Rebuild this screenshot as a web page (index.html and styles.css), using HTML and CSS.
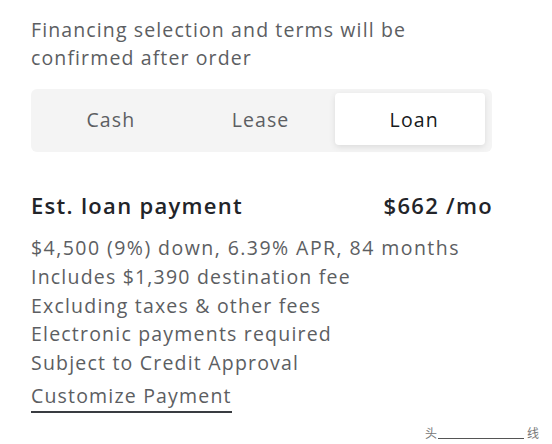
FILE: index.html
```
<!DOCTYPE html>
<html>
<head>
<meta charset="utf-8">
<link rel="stylesheet" href="styles.css">
</head>
<body>
<div class="page">
  <p class="note">Financing selection and terms will be confirmed after order</p>
  <div class="tabs">
    <div class="tab">Cash</div>
    <div class="tab">Lease</div>
    <div class="tab active">Loan</div>
  </div>
  <div class="payment">
    <span class="label">Est. loan payment</span>
    <span class="amount">$662 /mo</span>
  </div>
  <ul class="details">
    <li>$4,500 (9%) down, 6.39% APR, 84 months</li>
    <li>Includes $1,390 destination fee</li>
    <li>Excluding taxes &amp; other fees</li>
    <li>Electronic payments required</li>
    <li>Subject to Credit Approval</li>
  </ul>
  <a class="customize">Customize Payment</a>
  <div class="watermark"><span>头</span><span class="wm-line"></span><span>线</span></div>
</div>
</body>
</html>
```
FILE: styles.css
```
* { box-sizing: border-box; }
html, body { margin: 0; padding: 0; background: #fff; }
body {
  font-family: "Open Sans", "Noto Sans CJK SC", sans-serif;
  width: 552px;
  height: 444px;
  overflow: hidden;
}
.page {
  position: relative;
  padding: 16px 40px 0 31px;
  height: 444px;
}
.note {
  margin: 0;
  font-size: 19.5px;
  line-height: 28px;
  color: #5c5e62;
  letter-spacing: 1.12px;
  width: 440px;
}
.tabs {
  margin-top: 17px;
  width: 461px;
  height: 63px;
  background: #f4f4f4;
  border-radius: 6px;
  padding: 4px 7px 7px 5px;
  display: grid;
  grid-template-columns: 1fr 1fr 1fr;
}
.tab {
  display: flex;
  align-items: center;
  justify-content: center;
  font-size: 19.5px;
  color: #5c5e62;
  letter-spacing: 1.1px;
  border-radius: 4px;
}
.tab.active {
  background: #fff;
  color: #171a20;
  padding-left: 8px;
  box-shadow: 0 2px 6px rgba(0,0,0,0.10);
}
.payment {
  margin-top: 38px;
  width: 461px;
  display: flex;
  justify-content: space-between;
  align-items: baseline;
  font-size: 22px;
  font-weight: 600;
  color: #222429;
  letter-spacing: 1.3px;
  line-height: 30px;
}
.amount { margin-right: -1px; }
.details {
  list-style: none;
  margin: 14px 0 0 0;
  padding: 0;
  font-size: 19.5px;
  line-height: 28.8px;
  color: #5c5e62;
  letter-spacing: 1.2px;
}
.details li:first-child { letter-spacing: 1.45px; }
.customize {
  display: inline-block;
  margin-top: 4px;
  font-size: 19.5px;
  line-height: 28px;
  color: #5c5e62;
  letter-spacing: 1.18px;
  border-bottom: 2px solid #393c41;
  padding-bottom: 1px;
}
.watermark {
  position: absolute;
  right: 13px;
  bottom: 2px;
  display: flex;
  align-items: flex-end;
  font-size: 12px;
  color: #777;
}
.wm-line {
  width: 86px;
  height: 1px;
  background: #555;
  margin: 0 3px 3px 1px;
}
```
